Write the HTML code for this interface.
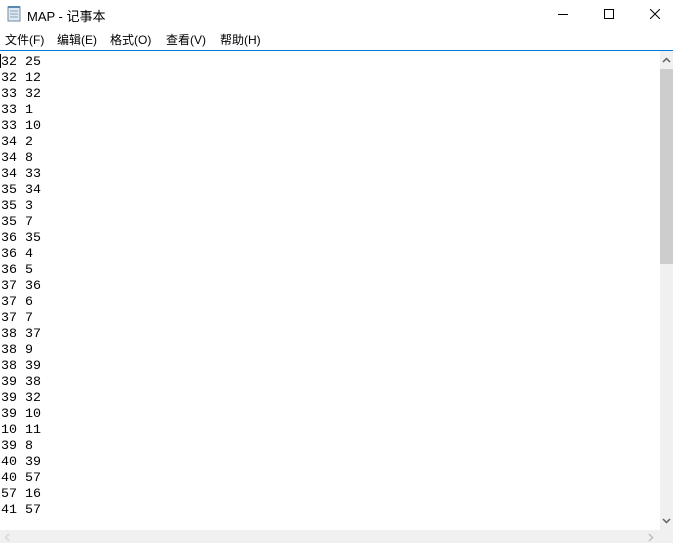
<!DOCTYPE html>
<html><head><meta charset="utf-8"><style>
*{margin:0;padding:0;box-sizing:border-box}
body{width:673px;height:543px;overflow:hidden;background:#fff;position:relative;font-family:"Liberation Sans","Noto Sans CJK SC",sans-serif}
.t{position:absolute;left:27px;top:6px;font-size:13px;color:#000}
.menu{position:absolute;top:31px;left:0;font-size:12px;color:#000}
.menu span{position:absolute;white-space:nowrap}
.line{position:absolute;left:0;top:50px;width:673px;height:1px;background:#0078d7}
pre{position:absolute;left:1px;top:55px;font-family:"Liberation Mono",monospace;font-size:13.33px;line-height:16px;color:#000}
.vs{position:absolute;left:660px;top:51px;width:13px;height:479px;background:#f0f0f0}
.th{position:absolute;left:660px;top:69px;width:13px;height:195px;background:#cdcdcd}
.hs{position:absolute;left:0;top:530px;width:673px;height:13px;background:#f0f0f0}
</style></head><body>
<svg style="position:absolute;left:6px;top:5px" width="16" height="18" viewBox="0 0 16 18"><rect x="2" y="2" width="12" height="14" fill="#dfe9f2" stroke="#6d8aa8"/><path d="M4 6h8M4 9h8M4 12h8" stroke="#8aa3bb"/><rect x="2" y="1" width="12" height="2" fill="#5b86b5"/></svg>
<div class="t">MAP - 记事本</div>
<svg style="position:absolute;left:558px;top:14px" width="10" height="1"><rect width="10" height="1" fill="#000"/></svg>
<svg style="position:absolute;left:604px;top:9px" width="10" height="10"><rect x="0.5" y="0.5" width="9" height="9" fill="none" stroke="#000"/></svg>
<svg style="position:absolute;left:650px;top:9px" width="10" height="10"><path d="M0 0L10 10M10 0L0 10" stroke="#000"/></svg>
<div class="menu"><span style="left:5px">文件(F)</span><span style="left:57px">编辑(E)</span><span style="left:110px">格式(O)</span><span style="left:166px">查看(V)</span><span style="left:220px">帮助(H)</span></div>
<div class="line"></div>
<pre>32 25
32 12
33 32
33 1
33 10
34 2
34 8
34 33
35 34
35 3
35 7
36 35
36 4
36 5
37 36
37 6
37 7
38 37
38 9
38 39
39 38
39 32
39 10
10 11
39 8
40 39
40 57
57 16
41 57</pre>
<div style="position:absolute;left:0;top:54px;width:1px;height:14px;background:#000"></div>
<div class="vs"></div><div class="th"></div>
<svg style="position:absolute;left:662px;top:57px" width="9" height="6"><path d="M1 5L4.5 1.5L8 5" stroke="#606060" stroke-width="1.5" fill="none"/></svg>
<svg style="position:absolute;left:662px;top:518px" width="9" height="6"><path d="M1 1L4.5 4.5L8 1" stroke="#606060" stroke-width="1.5" fill="none"/></svg>
<div class="hs"></div>
<svg style="position:absolute;left:648px;top:533px" width="6" height="9"><path d="M1 1L4.5 4.5L1 8" stroke="#bdbdbd" stroke-width="1.5" fill="none"/></svg>
<svg style="position:absolute;left:4px;top:533px" width="6" height="9"><path d="M5 1L1.5 4.5L5 8" stroke="#d6d6d6" stroke-width="1.5" fill="none"/></svg>
</body></html>
